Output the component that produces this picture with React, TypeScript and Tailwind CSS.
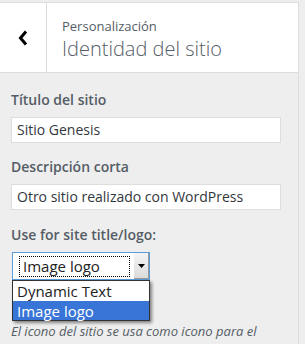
export default function App() {
  return (
    <div className="w-[305px] h-[344px] overflow-hidden bg-[#eeeeee] font-['Open_Sans',sans-serif]">
      <div className="w-[299px] h-full border-r border-[#dddddd]">
        <Header />
        <Body />
      </div>
    </div>
  );
}

function Header() {
  return (
    <div className="mt-[2px] h-[71px] flex bg-white border-y border-[#dddddd]">
      <div className="w-[47px] shrink-0 border-r border-[#dddddd] flex items-center justify-center">
        <svg width="10" height="16" viewBox="0 0 10 16">
          <path d="M8 1.5 L2.5 8 L8 14.5" fill="none" stroke="#000" strokeWidth="3" />
        </svg>
      </div>
      <div className="pl-[15px] pt-[13px] text-[#555d66]">
        <div className="text-[13px] leading-[20px]">Personalización</div>
        <div className="text-[20px] leading-[26px] font-light">Identidad del sitio</div>
      </div>
    </div>
  );
}

function Field({ label, value }: { label: string; value: string }) {
  return (
    <div>
      <div className="text-[14px] leading-[20px] font-semibold text-[#555d66]">{label}</div>
      <div className="mt-[7px] w-[270px] h-[26px] bg-white border border-[#dddddd] px-[5px] text-[14px] leading-[24px] text-[#32373c]">
        {value}
      </div>
    </div>
  );
}

function Body() {
  return (
    <div className="px-[11px] pt-[17px] flex flex-col gap-[14px]">
      <Field label="Título del sitio" value="Sitio Genesis" />
      <Field label="Descripción corta" value="Otro sitio realizado con WordPress" />
      <div>
        <div className="mt-[1px] text-[14px] leading-[20px] font-semibold text-[#555d66]">Use for site title/logo:</div>
        <div className="relative ml-[1px] mt-[7px] w-[138px]">
          <div className="h-[28px] flex items-center bg-white border border-[#5b9dd9] pl-[6px]">
            <div className="w-[111px] h-[21px] border border-dotted border-black pl-[3px] text-[15px] leading-[19px] text-[#222]">
              Image logo
            </div>
            <div className="ml-auto w-[15px] h-[26px] bg-gradient-to-b from-[#f4f4f4] to-[#dcdcdc] border-r border-b border-[#9a9a9a] flex items-center justify-center">
              <svg width="7" height="4" viewBox="0 0 7 4">
                <path d="M0 0 H7 L3.5 4 Z" fill="#000" />
              </svg>
            </div>
          </div>
          <div className="absolute left-0 top-full w-[138px] bg-white border border-[#333] shadow-[2px_2px_3px_rgba(0,0,0,0.45)] text-[15px] leading-[20px]">
            <div className="h-[20px] pl-[4px] text-[#222]">Dynamic Text</div>
            <div className="h-[19px] pl-[4px] bg-[#3875d7] text-white">Image logo</div>
          </div>
        </div>
        <div className="mt-[42px] text-[13px] leading-[18px] italic text-[#555d66] whitespace-nowrap">
          El icono del sitio se usa como icono para el
        </div>
      </div>
    </div>
  );
}
